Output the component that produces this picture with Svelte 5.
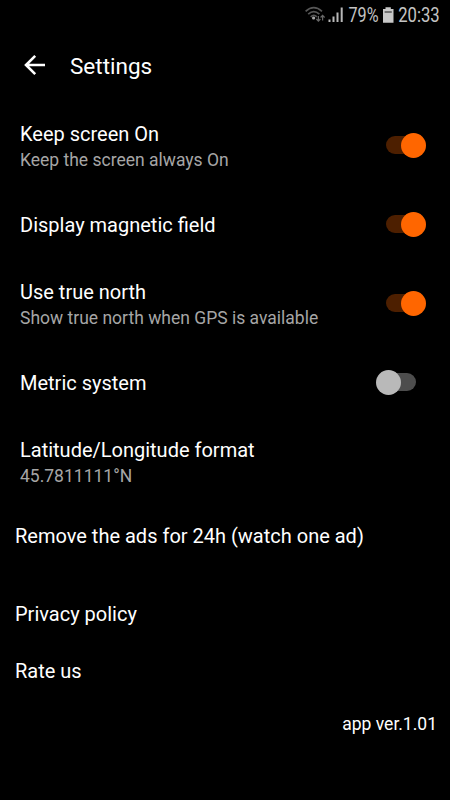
<script lang="ts">
	type Setting = {
		title: string;
		detail?: string;
		on?: boolean;
	};

	let settings: Setting[] = $state([
		{ title: 'Keep screen On', detail: 'Keep the screen always On', on: true },
		{ title: 'Display magnetic field', on: true },
		{ title: 'Use true north', detail: 'Show true north when GPS is available', on: true },
		{ title: 'Metric system', on: false },
		{ title: 'Latitude/Longitude format', detail: '45.7811111°N' }
	]);
</script>

<div class="screen">
	<div class="status">
		<svg width="145" height="32" viewBox="0 0 145 32">
			<!-- wifi -->
			<g fill="none" stroke="#575757" stroke-width="1.7">
				<path d="M.6 11.3Q8.8 4 17 11.3" />
				<path d="M3.2 14.2Q8.8 9 14.4 14.2" />
				<path d="M5.7 16.8Q8.8 13.8 11.9 16.8" />
			</g>
			<circle cx="8.6" cy="18" r="1.6" fill="#a8a8a8" />
			<g fill="none" stroke="#686868" stroke-width="1.2">
				<path d="M13.4 16V21M11.4 19L13.4 21.2L15.4 19" />
				<path d="M17.6 20.5V15.5M15.6 17.5L17.6 15.3L19.6 17.5" />
			</g>
			<!-- signal -->
			<path d="M24.5 19.5V22M28.5 16.5V22M32.5 12.5V22M36.7 7.5V22" stroke="#b8b8b8" stroke-width="2" />
			<text x="43.5" y="22" textLength="30" lengthAdjust="spacingAndGlyphs">79%</text>
			<!-- battery -->
			<path d="M80.5 7.3h5.3v1.7h2.7v13.7H78V9h2.5Z" fill="#c8c8c8" />
			<path d="M79.6 12h7.2" stroke="#555" stroke-width="1.5" />
			<text x="93.2" y="22" textLength="41.5" lengthAdjust="spacingAndGlyphs">20:33</text>
		</svg>
	</div>

	<header>
		<button class="back" aria-label="Back">
			<svg width="22" height="22" viewBox="0 0 22 22">
				<path d="M21 11H2.5M11.2 1.8L2 11L11.2 20.2" fill="none" stroke="#fff" stroke-width="2.6" />
			</svg>
		</button>
		<h1>Settings</h1>
	</header>

	<div class="settings">
		{#each settings as s}
			<div class="row">
				<div class="label" class:single={!s.detail}>
					<div class="title">{s.title}</div>
					{#if s.detail}
						<div class="detail">{s.detail}</div>
					{/if}
				</div>
				{#if s.on !== undefined}
					<button
						class="switch"
						class:on={s.on}
						role="switch"
						aria-checked={s.on}
						aria-label={s.title}
						onclick={() => (s.on = !s.on)}
					>
						<span class="thumb"></span>
					</button>
				{/if}
			</div>
		{/each}
	</div>

	<div class="links">
		<button class="ads">Remove the ads for 24h (watch one ad)</button>
		<button>Privacy policy</button>
		<button>Rate us</button>
	</div>

	<footer>app ver.1.01</footer>
</div>

<style>
	:global(body) {
		background: #000;
	}
	.screen {
		box-sizing: border-box;
		height: 800px;
		overflow: hidden;
		background: #000;
		color: #fff;
		font-family: Roboto, sans-serif;
		font-size: 20px;
	}
	button {
		padding: 0;
		border: 0;
		background: none;
		color: inherit;
		font: inherit;
		text-align: left;
	}
	svg {
		display: block;
	}
	.status {
		display: flex;
		justify-content: flex-end;
		height: 32px;
	}
	.status text {
		fill: #c4c4c4;
		font-size: 19.5px;
	}
	header {
		display: flex;
		align-items: center;
		gap: 24px;
		height: 68px;
		padding-left: 24px;
	}
	.back {
		margin-bottom: 2px;
	}
	h1 {
		margin: 0;
		font-size: 22.5px;
		font-weight: 400;
	}
	.settings {
		padding-top: 7px;
	}
	.row {
		display: flex;
		align-items: center;
		justify-content: space-between;
		height: 79px;
		padding: 0 34px 0 20px;
	}
	.single {
		padding-bottom: 2px;
	}
	.title,
	.detail {
		line-height: 26px;
	}
	.detail {
		color: #a6a6a6;
		font-size: 17.5px;
	}
	.switch {
		display: flex;
		align-items: center;
		width: 30px;
		height: 18px;
		margin-bottom: 3px;
		border-radius: 9px;
		background: #4d4d4d;
	}
	.thumb {
		flex: none;
		width: 25px;
		height: 25px;
		margin-left: -10px;
		border-radius: 50%;
		background: #b9b9b9;
	}
	.switch.on {
		background: #4d1f00;
	}
	.on .thumb {
		margin-left: 15px;
		background: #ff6600;
	}
	.links {
		display: flex;
		flex-direction: column;
		padding: 5px 15px 0;
	}
	.links button {
		height: 57px;
	}
	.links .ads {
		height: 78px;
		padding-bottom: 20px;
	}
	footer {
		padding-right: 13px;
		font-size: 17.5px;
		line-height: 50px;
		text-align: right;
	}
</style>
